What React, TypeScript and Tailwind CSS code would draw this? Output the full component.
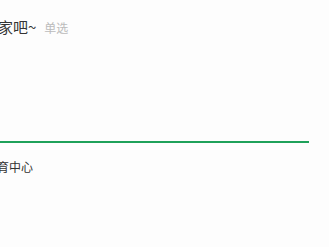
export default function App() {
  return (
    <div
      className="relative h-[247px] w-[329px] overflow-hidden bg-[#fdfdfd]"
      style={{ fontFamily: '"Noto Sans CJK SC", "Noto Sans", sans-serif' }}
    >
      <div className="ml-[-2px] flex items-baseline pt-[17px]">
        <span className="text-[15px] leading-[20px] text-[#333]">家吧~</span>
        <span className="ml-[8px] text-[12px] leading-[20px] text-[#bbb]">单选</span>
      </div>
      <div className="mt-[103px] h-[2px] w-[309px] bg-[#1fa15a]" />
      <div className="ml-[-3px] mt-[16px] text-[12px] leading-[16px] text-[#333]">育中心</div>
    </div>
  );
}
